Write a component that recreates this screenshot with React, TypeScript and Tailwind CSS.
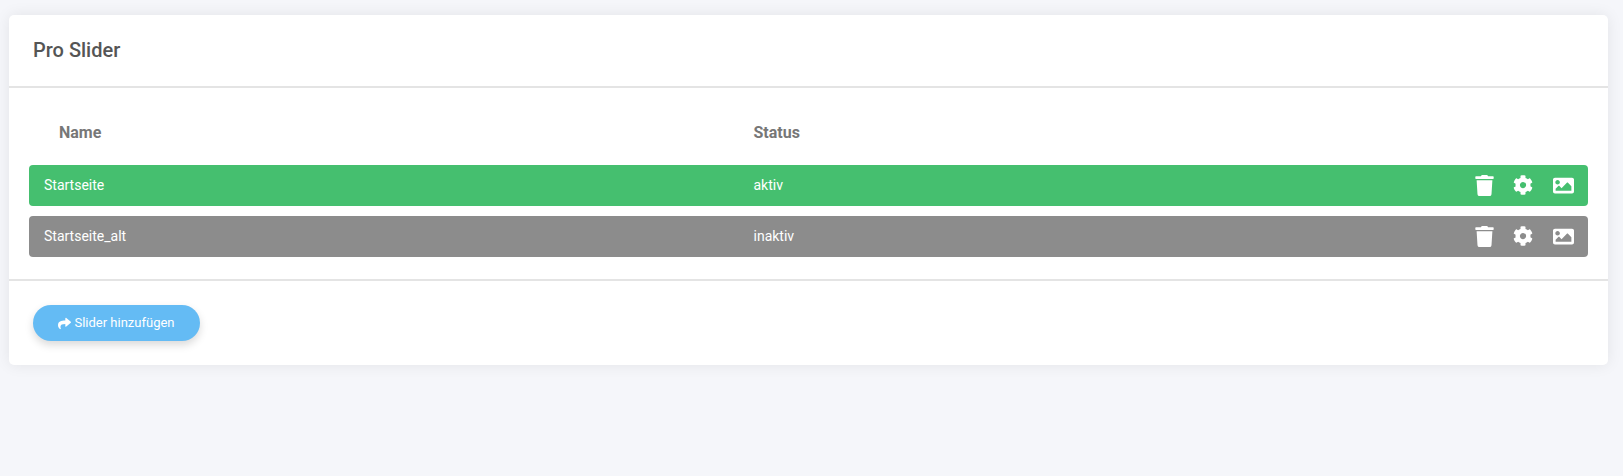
import { FaCog, FaImage, FaShare, FaTrash } from "react-icons/fa";

function Row({ name, status, color }: { name: string; status: string; color: string }) {
  return (
    <div className={`flex h-[41px] items-center rounded-[4px] pl-[15px] pr-[14px] text-[14px] text-white ${color}`}>
      <div className="w-[709.5px]">{name}</div>
      <div className="flex-1">{status}</div>
      <div className="flex items-center gap-[19px] pb-[1px]">
        <FaTrash className="text-[21px]" />
        <FaCog className="-ml-[1px] mr-[1px] text-[20px]" />
        <FaImage className="text-[21px]" />
      </div>
    </div>
  );
}

export default function App() {
  return (
    <div className="min-h-[476px] bg-[#f5f6fa] pl-[9px] pr-[15px] pt-[15px] font-['Roboto',sans-serif]">
      <div className="h-[350px] rounded-[5px] bg-white shadow-[0_0_15px_rgba(0,0,0,0.08)]">
        <div className="flex h-[73px] items-center border-b-2 border-[#e4e4e4] pb-[2px] pl-[24px] text-[20px] font-medium text-[#555]">Pro Slider</div>
        <div className="h-[193px] border-b-2 border-[#e4e4e4] px-[20px]">
          <div className="flex h-[77px] items-center pt-[12px] text-[16px] font-bold text-[#777]">
            <div className="w-[724.5px] pl-[30px]">Name</div>
            <div>Status</div>
          </div>
          <div className="flex flex-col gap-[10px]">
            <Row name="Startseite" status="aktiv" color="bg-[#45bf6f]" />
            <Row name="Startseite_alt" status="inaktiv" color="bg-[#8c8c8c]" />
          </div>
        </div>
        <div className="px-[24px] pt-[24px]">
          <button className="flex h-[36px] w-[167px] items-center justify-center gap-[3px] rounded-full bg-[#64bbf4] text-[13px] text-white shadow-[0_4px_8px_rgba(0,0,0,0.15)]">
            <FaShare className="text-[13px]" /> Slider hinzufügen
          </button>
        </div>
      </div>
    </div>
  );
}
